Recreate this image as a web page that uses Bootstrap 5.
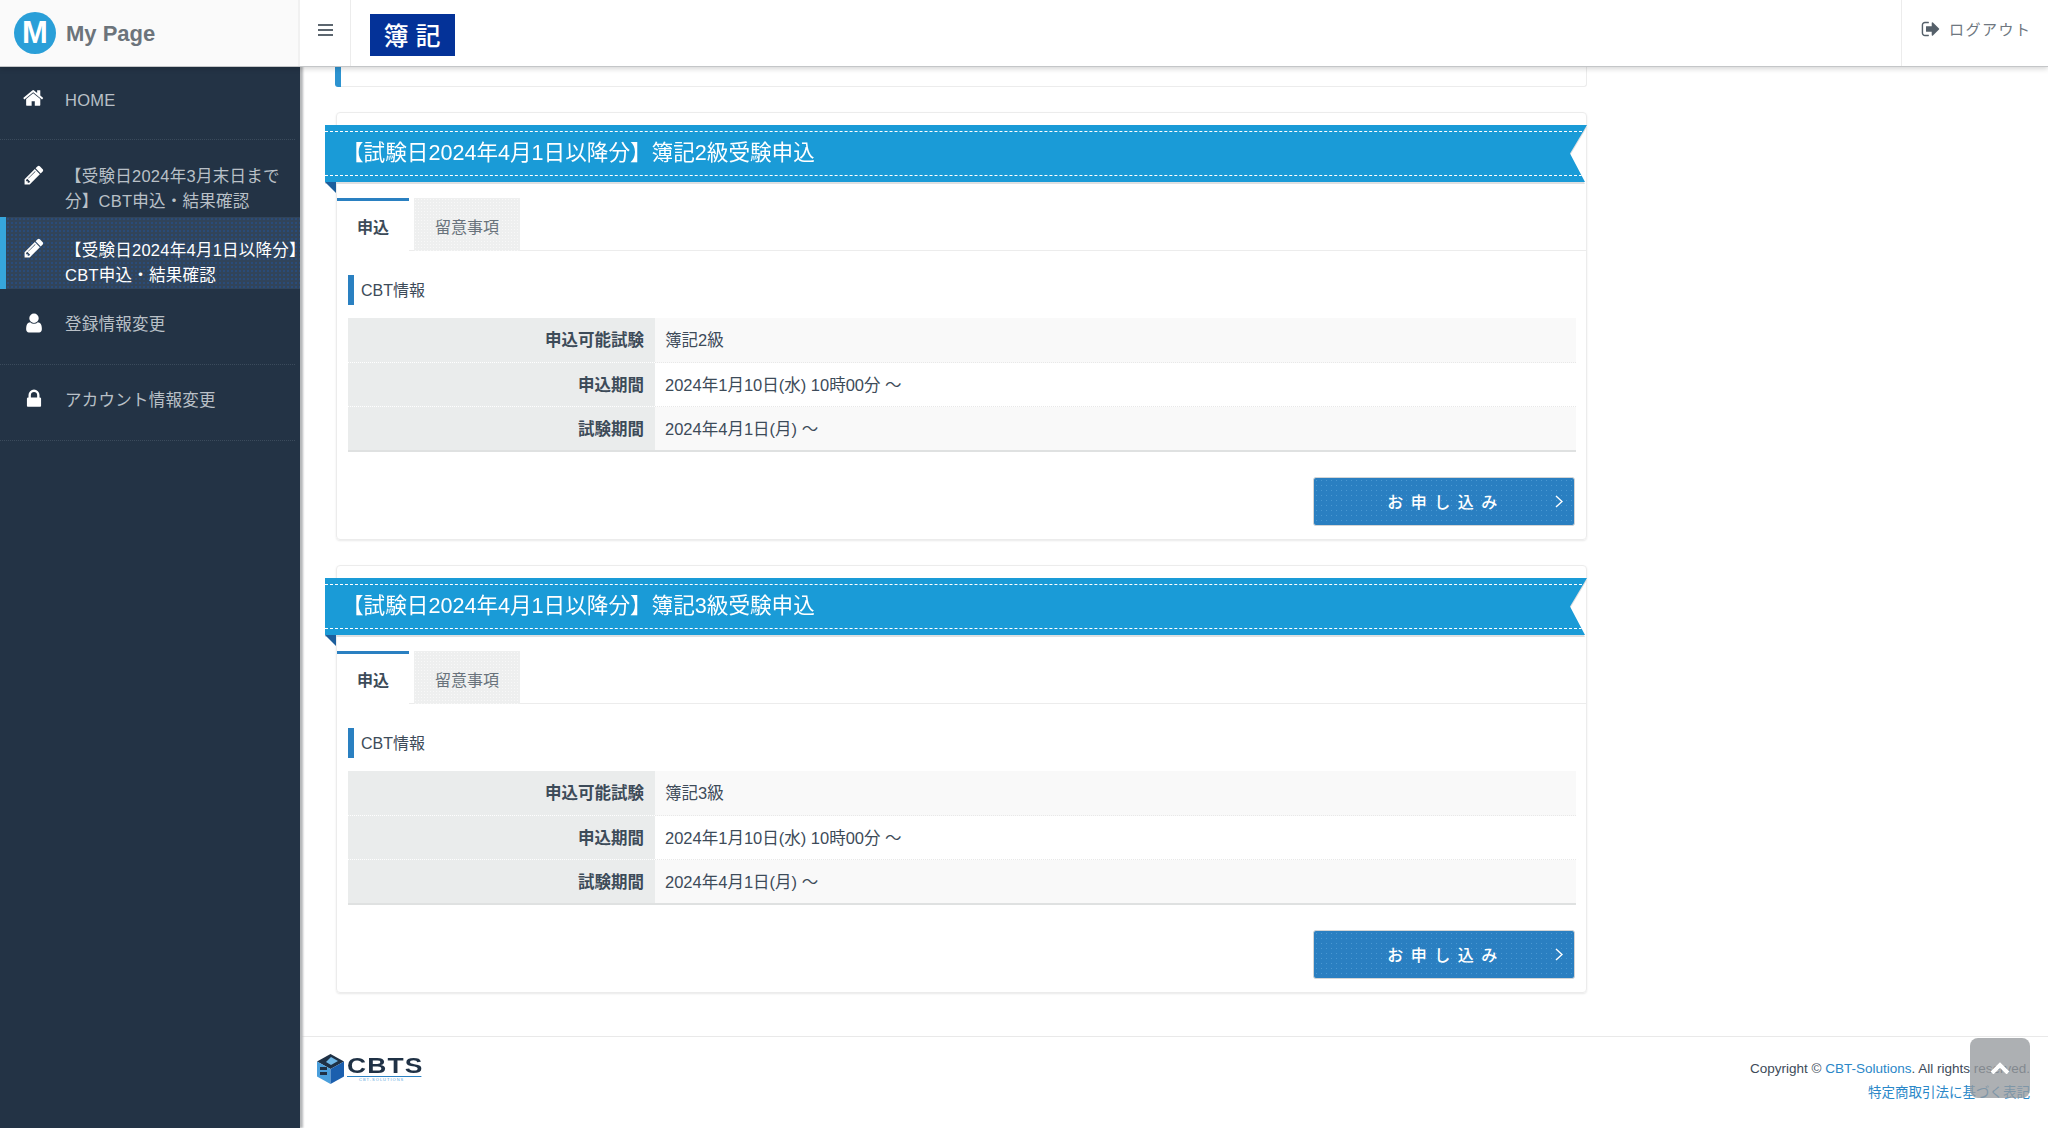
<!DOCTYPE html>
<html lang="ja">
<head>
    <meta charset="utf-8">
    <title>My Page</title>
    <link href="https://cdn.jsdelivr.net/npm/bootstrap@5.3.0/dist/css/bootstrap.min.css" rel="stylesheet">
    <style>
        html, body { height: 100%; }
        body { font-family: "Liberation Sans", "Noto Sans CJK JP", sans-serif; color: #3d4b59; background: #fff; overflow: hidden; }
        svg { display: block; fill: currentColor; }

        /* header */
        .top-bar { height: 66px; background: #fff; position: relative; z-index: 5; box-shadow: 0 1px 0 #c4c6c8, 0 3px 5px rgba(0,0,0,.16); }
        .brand-box { width: 300px; background: #fafafa; gap: 10px; padding-left: 14px; border-right: 2px solid #f1f1f1; }
        .brand-circle { width: 42px; height: 42px; border-radius: 50%; background: #2a9fd8; color: #fff; font-size: 31px; font-weight: 700; line-height: 42px; text-align: center; }
        .brand-name { font-size: 22px; font-weight: 700; color: #6c747b; }
        .menu-toggle { width: 51px; border-right: 1px solid #ececec; color: #5c666f; }
        .bars-icon { width: 15px; height: 12px; margin-top: -6px; }
        .boki-logo { width: 85px; height: 42px; margin-left: 19px; margin-top: 3px; background: #043298; color: #fff; font-size: 25px; font-weight: 500; letter-spacing: 7px; line-height: 41px; text-align: center; font-family: "Noto Sans CJK JP", sans-serif; padding-left: 6px; }
        .logout-box { width: 147px; border-left: 1px solid #ececec; padding-left: 19px; padding-top: 19px; gap: 8px; color: #6e7780; font-size: 15px; letter-spacing: 1.5px; }
        .logout-box svg { width: 20px; height: 20px; color: #55606a; }

        /* side menu */
        .page-wrap { height: 1062px; }
        .side-menu { width: 300px; background: #233345; flex: none; box-shadow: 3px 0 2px #b6b8ba; position: relative; z-index: 2; }
        .side-link { display: flex; padding-left: 23px; color: #b9c0c7; font-size: 16.5px; letter-spacing: .25px; line-height: 25px; text-decoration: none; position: relative; }
        .side-link svg { width: 22px; height: 22px; flex: none; color: #fff; margin-right: 20px; }
        .side-link.with-line::after { content: ""; position: absolute; left: 0; right: 5px; bottom: 0; border-bottom: 1px dotted #3b4b5c; }
        .side-home { height: 74px; padding-top: 22px; }
        .side-home svg { margin-top: -1px; }
        .side-old { height: 77px; padding-top: 24px; }
        .side-now { height: 72px; padding-top: 21px; padding-left: 17px; color: #fff; background-color: #31445a; border-left: 6px solid #36a6dc;
            background-image: radial-gradient(#27508a 0.6px, transparent 0.9px); background-size: 4px 4px; }
        .side-now svg { margin-top: -1px; }
        .side-user { height: 76px; padding-top: 23px; }
        .side-lock { height: 76px; padding-top: 23px; }

        /* main */
        .main-col { flex: 1; min-width: 0; position: relative; }
        .content-wrap { width: 1287px; padding-left: 36px; }
        .cut-panel { height: 21px; border: 1px solid #ececec; border-top: 0; border-radius: 0 0 3px 3px; position: relative; }
        .cut-panel::before { content: ""; position: absolute; left: -2px; top: 0; bottom: -1px; width: 6px; background: #2c93d0; border-radius: 0 0 0 3px; }
        .exam-panel { height: 428px; margin-top: 25px; border: 1px solid #ececec; border-radius: 4px; box-shadow: 0 1px 2px rgba(0,0,0,.09); padding-top: 12px; position: relative; }
        .ribbon-wrap { filter: drop-shadow(0 2px 0 #dfe0e1); margin-left: -12px; margin-right: -1px; }
        .exam-ribbon { height: 57px; background: #1a9bd7; color: #fff; font-size: 21.6px; padding: 6px 0 0 17px; position: relative;
            clip-path: polygon(0 0, 100% 0, calc(100% - 17px) 50%, calc(100% - 2px) 100%, 0 100%); line-height: 44px; }
        .exam-ribbon::before, .exam-ribbon::after { content: ""; position: absolute; left: 0; right: 0; border-top: 1px dashed #fff; }
        .exam-ribbon::before { top: 6px; }
        .exam-ribbon::after { bottom: 6px; }
        .ribbon-fold { position: absolute; left: -12px; top: 69px; width: 0; height: 0; border-top: 11px solid #1c5e9c; border-left: 11px solid transparent; }

        .exam-tabs { margin-top: 16px; padding-left: 0; border-bottom: 1px solid #ececec; gap: 5px; height: 53px; }
        .exam-tabs .nav-link { height: 53px; border: 0; border-radius: 0; color: #69737c; background-color: #eeefef; font-size: 16px; width: 106px; padding: 18px 0 0; text-align: center; line-height: 24px;
            background-image: radial-gradient(#f8f8f8 0.5px, transparent 0.8px); background-size: 3px 3px; }
        .exam-tabs .nav-link.active { width: 72px; color: #3d4b59; font-weight: 700; background: #fff; border-top: 3px solid #2a80c1; padding-top: 15px; }

        .panel-body-in { padding: 24px 10px 0 11px; }
        .cbt-head { border-left: 6px solid #2a80c1; height: 30px; line-height: 32px; padding-left: 7px; font-size: 16px; margin-bottom: 13px; }
        .info-tbl { margin: 0; border-collapse: separate; border-spacing: 0; }
        .info-tbl th, .info-tbl td { height: 44.5px; padding: 2px 0 0; vertical-align: middle; font-size: 16.5px; border: 0; color: #3d4b59; }
        .info-tbl th { width: 307px; text-align: right; padding-right: 11px; background: #eaecec; font-weight: 700; border-bottom: 1px dotted #fff; }
        .info-tbl td { padding-left: 10px; border-bottom: 1px dotted #e8e8e8; }
        .info-tbl tr:nth-child(odd) td { background: #f9f9f9; }
        .info-tbl tr:last-child th, .info-tbl tr:last-child td { border-bottom: 2px solid #dfe1e1; }
        .apply-row { margin-top: 25px; padding-right: 1px; }
        .apply-btn { width: 262px; height: 49px; position: relative; border: 1px solid #d3d5d6; border-radius: 3px; background-color: #2a7fc1; color: #fff; font-size: 16px; font-weight: 500; letter-spacing: 7.5px; padding: 3px 0 0 4px;
            background-image: radial-gradient(#4a98d2 0.6px, transparent 0.9px); background-size: 5px 5px; }
        .apply-btn:hover { background-color: #2a7fc1; color: #fff; border-color: #d3d5d6; }
        .apply-btn svg { position: absolute; right: 11px; top: 17px; width: 8px; height: 13px; fill: none; stroke: #fff; stroke-width: 1.4; }

        /* footer */
        .page-foot { margin-top: 43px; border-top: 1px solid #e9e9e9; height: 90px; padding: 17px 18px 0 17px; }
        .cbts-logo { gap: 3px; }
        .cbts-logo svg { width: 27px; height: 30px; }
        .cbts-word { font-size: 22px; line-height: 20px; font-weight: 700; color: #1f3145; letter-spacing: 1px; transform: scaleX(1.2); transform-origin: left; border-bottom: 1px solid #2a80c1; width: 62px; margin-top: 2px; }
        .cbts-sub { font-size: 4px; line-height: 5px; color: #5ba8dc; letter-spacing: 1px; padding-left: 12px; }
        .copy-text { font-size: 13.5px; line-height: 24px; color: #3d4b59; text-align: right; padding-top: 3px; }
        .copy-text a { color: #2a87c8; text-decoration: none; }
        .to-top { position: absolute; right: 18px; bottom: 30px; width: 60px; height: 60px; background: rgba(150,154,158,.78); border-radius: 8px; color: #fff; }
        .to-top svg { position: absolute; left: 20px; top: 24px; width: 20px; height: 12px; fill: none; stroke: #fff; stroke-width: 4; }
    </style>
</head>
<body>
    <header class="top-bar d-flex">
        <div class="brand-box d-flex align-items-center">
            <div class="brand-circle">M</div>
            <div class="brand-name">My Page</div>
        </div>
        <div class="menu-toggle d-flex align-items-center justify-content-center">
            <svg class="bars-icon" viewBox="0 0 15 12"><rect width="15" height="2"/><rect y="5" width="15" height="2"/><rect y="10" width="15" height="2"/></svg>
        </div>
        <div class="d-flex align-items-center"><div class="boki-logo">簿記</div></div>
        <div class="logout-box d-flex align-items-start ms-auto">
            <svg viewBox="0 0 1792 1792"><path d="M704 1440q0 4 1 20t.5 26.5-3 23.5-10 19.5-20.5 6.5h-320q-119 0-203.5-84.5t-84.5-203.5v-704q0-119 84.5-203.5t203.5-84.5h320q13 0 22.5 9.5t9.5 22.5q0 4 1 20t.5 26.5-3 23.5-10 19.5-20.5 6.5h-320q-66 0-113 47t-47 113v704q0 66 47 113t113 47h312l11.5 1 11.5 3 8 5.5 7 9 2 13.5zm928-544q0 26-19 45l-544 544q-19 19-45 19t-45-19-19-45v-288h-448q-26 0-45-19t-19-45v-384q0-26 19-45t45-19h448v-288q0-26 19-45t45-19 45 19l544 544q19 19 19 45z"/></svg>
            <span>ログアウト</span>
        </div>
    </header>

    <div class="page-wrap d-flex">
        <nav class="side-menu">
            <a class="side-link side-home with-line" href="#">
                <svg viewBox="0 0 1792 1792"><path d="M1408 992v480q0 26-19 45t-45 19h-384v-384h-256v384h-384q-26 0-45-19t-19-45v-480q0-1 .5-3t.5-3l575-474 575 474q1 2 1 6zm223-69l-62 74q-8 9-21 11h-3q-13 0-21-7l-692-577-692 577q-12 8-24 7-13-2-21-11l-62-74q-8-10-7-23.5t11-21.5l719-599q32-26 76-26t76 26l244 204v-195q0-14 9-23t23-9h192q14 0 23 9t9 23v408l219 182q10 8 11 21.5t-7 23.5z"/></svg>
                <span>HOME</span>
            </a>
            <a class="side-link side-old" href="#">
                <svg viewBox="0 0 1792 1792"><path d="M491 1536l91-91-235-235-91 91v107h128v128h107zm523-928q0-22-22-22-10 0-17 7l-542 542q-7 7-7 17 0 22 22 22 10 0 17-7l542-542q7-7 7-17zm-54-192l416 416-832 832h-416v-416zm683 96q0 53-37 90l-166 166-416-416 166-165q36-38 90-38 53 0 91 38l235 234q37 39 37 91z"/></svg>
                <span>【受験日2024年3月末日まで<br>分】CBT申込・結果確認</span>
            </a>
            <a class="side-link side-now" href="#">
                <svg viewBox="0 0 1792 1792"><path d="M491 1536l91-91-235-235-91 91v107h128v128h107zm523-928q0-22-22-22-10 0-17 7l-542 542q-7 7-7 17 0 22 22 22 10 0 17-7l542-542q7-7 7-17zm-54-192l416 416-832 832h-416v-416zm683 96q0 53-37 90l-166 166-416-416 166-165q36-38 90-38 53 0 91 38l235 234q37 39 37 91z"/></svg>
                <span class="text-nowrap">【受験日2024年4月1日以降分】<br>CBT申込・結果確認</span>
            </a>
            <a class="side-link side-user with-line" href="#">
                <svg viewBox="0 0 1792 1792"><path d="M1536 1399q0 109-62.5 187t-150.5 78h-854q-88 0-150.5-78t-62.5-187q0-85 8.5-160.5t31.5-152 58.5-131 94-89 134.5-34.5q131 128 313 128t313-128q76 0 134.5 34.5t94 89 58.5 131 31.5 152 8.5 160.5zm-256-887q0 159-112.5 271.5t-271.5 112.5-271.5-112.5-112.5-271.5 112.5-271.5 271.5-112.5 271.5 112.5 112.5 271.5z"/></svg>
                <span>登録情報変更</span>
            </a>
            <a class="side-link side-lock with-line" href="#">
                <svg viewBox="0 0 1792 1792"><path d="M640 768h512v-192q0-106-75-181t-181-75-181 75-75 181v192zm832 96v576q0 40-28 68t-68 28h-960q-40 0-68-28t-28-68v-576q0-40 28-68t68-28h32v-192q0-184 132-316t316-132 316 132 132 316v192h32q40 0 68 28t28 68z"/></svg>
                <span>アカウント情報変更</span>
            </a>
        </nav>

        <main class="main-col">
            <div class="content-wrap">
                <div class="cut-panel"></div>

                <section class="exam-panel">
                    <div class="ribbon-wrap"><div class="exam-ribbon">【試験日2024年4月1日以降分】簿記2級受験申込</div></div>
                    <div class="ribbon-fold"></div>
                    <ul class="nav nav-tabs exam-tabs">
                        <li class="nav-item"><a class="nav-link active" href="#">申込</a></li>
                        <li class="nav-item"><a class="nav-link" href="#">留意事項</a></li>
                    </ul>
                    <div class="panel-body-in">
                        <div class="cbt-head">CBT情報</div>
                        <table class="table info-tbl">
                            <tbody>
                                <tr><th>申込可能試験</th><td>簿記2級</td></tr>
                                <tr><th>申込期間</th><td>2024年1月10日(水) 10時00分 ～</td></tr>
                                <tr><th>試験期間</th><td>2024年4月1日(月) ～</td></tr>
                            </tbody>
                        </table>
                        <div class="apply-row d-flex justify-content-end">
                            <button class="btn apply-btn">お申し込み<svg viewBox="0 0 8 13"><path d="M1 1l6 5.5-6 5.5"/></svg></button>
                        </div>
                    </div>
                </section>

                <section class="exam-panel">
                    <div class="ribbon-wrap"><div class="exam-ribbon">【試験日2024年4月1日以降分】簿記3級受験申込</div></div>
                    <div class="ribbon-fold"></div>
                    <ul class="nav nav-tabs exam-tabs">
                        <li class="nav-item"><a class="nav-link active" href="#">申込</a></li>
                        <li class="nav-item"><a class="nav-link" href="#">留意事項</a></li>
                    </ul>
                    <div class="panel-body-in">
                        <div class="cbt-head">CBT情報</div>
                        <table class="table info-tbl">
                            <tbody>
                                <tr><th>申込可能試験</th><td>簿記3級</td></tr>
                                <tr><th>申込期間</th><td>2024年1月10日(水) 10時00分 ～</td></tr>
                                <tr><th>試験期間</th><td>2024年4月1日(月) ～</td></tr>
                            </tbody>
                        </table>
                        <div class="apply-row d-flex justify-content-end">
                            <button class="btn apply-btn">お申し込み<svg viewBox="0 0 8 13"><path d="M1 1l6 5.5-6 5.5"/></svg></button>
                        </div>
                    </div>
                </section>
            </div>

            <footer class="page-foot d-flex justify-content-between">
                <div class="cbts-logo d-flex">
                    <svg viewBox="0 0 27 30"><polygon points="13.5,0 27,7.5 13.5,15 0,7.5" fill="#1f3145"/><polygon points="0,7.5 13.5,15 13.5,30 0,22.5" fill="#4a9fdc"/><polygon points="27,7.5 13.5,15 13.5,30 27,22.5" fill="#1b5fae"/><polygon points="14,3 21,7 14,11 9,8" fill="#6fb6e6"/><rect x="3" y="13" width="7" height="3" fill="#1f3145"/><rect x="3" y="18" width="7" height="3" fill="#1f3145"/></svg>
                    <div>
                        <div class="cbts-word">CBTS</div>
                        <div class="cbts-sub">CBT-SOLUTIONS</div>
                    </div>
                </div>
                <div class="copy-text">
                    <div>Copyright © <a href="#">CBT-Solutions</a>. All rights reserved.</div>
                    <div><a href="#">特定商取引法に基づく表記</a></div>
                </div>
            </footer>
            <div class="to-top"><svg viewBox="0 0 20 12"><path d="M2 11l8-8 8 8"/></svg></div>
        </main>
    </div>
    <script src="https://cdn.jsdelivr.net/npm/bootstrap@5.3.0/dist/js/bootstrap.bundle.min.js"></script>
</body>
</html>
